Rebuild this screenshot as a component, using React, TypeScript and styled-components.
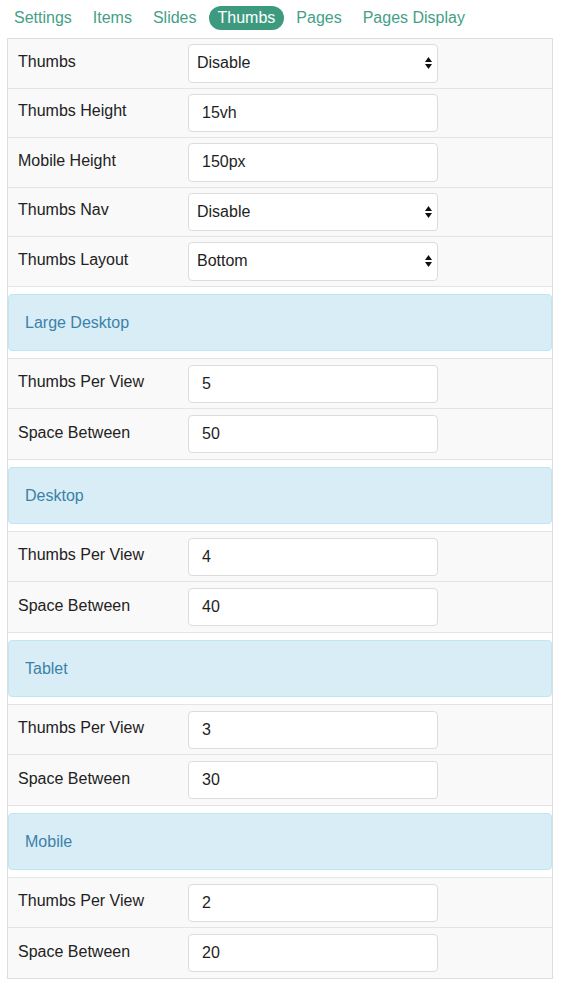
import React from "react";
import styled, { createGlobalStyle } from "styled-components";

const Global = createGlobalStyle`
  html, body { margin: 0; padding: 0; background: #fff; }
  body { font-family: "Liberation Sans", Arial, sans-serif; font-size: 16px; color: #222; }
  * { box-sizing: border-box; }
`;

const Page = styled.div`
  padding: 0 8px 0 7px;
`;

const Nav = styled.nav`
  display: flex;
  gap: 3px;
  padding: 6px 0 8px;
  margin-left: -2px;
`;

const Tab = styled.a<{ $active?: boolean }>`
  display: block;
  height: 24px;
  line-height: 24px;
  padding: 0 9px;
  border-radius: 12px;
  font-size: 16px;
  text-decoration: none;
  color: ${(p) => (p.$active ? "#fff" : "#45a087")};
  background: ${(p) => (p.$active ? "#3d9a7f" : "transparent")};
`;

const Panel = styled.div`
  border: 1px solid #ddd;
  background: #fff;
`;

const Row = styled.div<{ $pad: string; $first?: boolean }>`
  display: grid;
  grid-template-columns: 180px 250px;
  align-items: center;
  padding: ${(p) => p.$pad};
  background: #f9f9f9;
  border-top: ${(p) => (p.$first ? "none" : "1px solid #e4e4e4")};
`;

const Label = styled.div`
  padding-left: 10px;
  padding-bottom: 3px;
  font-size: 16px;
  color: #222;
`;

const Field = styled.div<{ $h: number }>`
  position: relative;
  height: ${(p) => p.$h}px;
  border: 1px solid #dcdcdc;
  border-radius: 4px;
  background: #fff;
  display: flex;
  align-items: center;
`;

const FieldText = styled.span<{ $indent: number }>`
  padding-left: ${(p) => p.$indent}px;
  font-size: 16px;
  color: #1e1e1e;
`;

const Arrows = styled.svg`
  position: absolute;
  right: 4px;
  top: 50%;
  transform: translateY(-50%);
`;

const AlertCell = styled.div`
  padding: 7px 0;
  border-top: 1px solid #e4e4e4;
  background: #fff;
`;

const Alert = styled.div`
  padding: 17px 16px;
  line-height: 21px;
  font-size: 16px;
  color: #3b82a8;
  background: #d9edf7;
  border: 1px solid #bce8f1;
  border-radius: 4px;
`;

type FieldProps = { value: string; select?: boolean; h: number };

const Input = ({ value, select, h }: FieldProps) => (
  <Field $h={h}>
    <FieldText $indent={select ? 8 : 13}>{value}</FieldText>
    {select && (
      <Arrows width="9" height="13" viewBox="0 0 9 13">
        <polygon points="1,5.5 4.5,0.5 8,5.5" fill="#111" />
        <polygon points="1,7.5 4.5,12.5 8,7.5" fill="#111" />
      </Arrows>
    )}
  </Field>
);

const topRows: { label: string; value: string; select?: boolean }[] = [
  { label: "Thumbs", value: "Disable", select: true },
  { label: "Thumbs Height", value: "15vh" },
  { label: "Mobile Height", value: "150px" },
  { label: "Thumbs Nav", value: "Disable", select: true },
  { label: "Thumbs Layout", value: "Bottom", select: true },
];

const groups = [
  { title: "Large Desktop", per: "5", space: "50" },
  { title: "Desktop", per: "4", space: "40" },
  { title: "Tablet", per: "3", space: "30" },
  { title: "Mobile", per: "2", space: "20" },
];

const tabs = ["Settings", "Items", "Slides", "Thumbs", "Pages", "Pages Display"];

export default function App() {
  return (
    <Page>
      <Global />
      <Nav>
        {tabs.map((t) => (
          <Tab key={t} $active={t === "Thumbs"}>
            {t}
          </Tab>
        ))}
      </Nav>
      <Panel>
        {topRows.map((r, i) => (
          <Row key={r.label} $pad="5px 0" $first={i === 0}>
            <Label>{r.label}</Label>
            <Input value={r.value} select={r.select} h={38.5} />
          </Row>
        ))}
        {groups.map((g) => (
          <React.Fragment key={g.title}>
            <AlertCell>
              <Alert>{g.title}</Alert>
            </AlertCell>
            <Row $pad="6px 0 5.5px">
              <Label>Thumbs Per View</Label>
              <Input value={g.per} h={38} />
            </Row>
            <Row $pad="6px 0 5.5px">
              <Label>Space Between</Label>
              <Input value={g.space} h={38} />
            </Row>
          </React.Fragment>
        ))}
      </Panel>
    </Page>
  );
}
